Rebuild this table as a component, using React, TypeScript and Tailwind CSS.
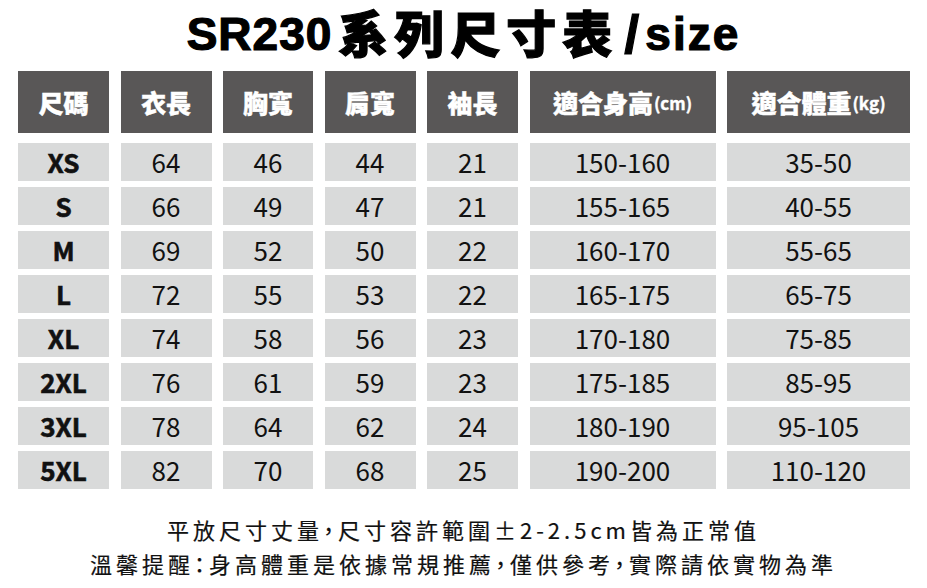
import React from "react";

const headers: { main: string; unit?: string }[] = [
  { main: "尺碼" },
  { main: "衣長" },
  { main: "胸寬" },
  { main: "肩寬" },
  { main: "袖長" },
  { main: "適合身高", unit: "(cm)" },
  { main: "適合體重", unit: "(kg)" },
];

const rows: string[][] = [
  ["XS", "64", "46", "44", "21", "150-160", "35-50"],
  ["S", "66", "49", "47", "21", "155-165", "40-55"],
  ["M", "69", "52", "50", "22", "160-170", "55-65"],
  ["L", "72", "55", "53", "22", "165-175", "65-75"],
  ["XL", "74", "58", "56", "23", "170-180", "75-85"],
  ["2XL", "76", "61", "59", "23", "175-185", "85-95"],
  ["3XL", "78", "64", "62", "24", "180-190", "95-105"],
  ["5XL", "82", "70", "68", "25", "190-200", "110-120"],
];

const gridCols =
  "grid grid-cols-[91px_91px_90px_91px_91px_186px_183px] gap-x-[11.5px]";

const cjk = "font-['Noto_Sans_CJK_TC','Noto_Sans_CJK_SC',sans-serif]";

export default function App() {
  return (
    <div className="w-[927px] h-[588px] bg-white overflow-hidden text-[#111]">
      <div className="pt-[4px] h-[71px] text-center text-[50px] leading-[60px] font-black text-black [-webkit-text-stroke:1.2px_black] font-['Liberation_Sans','Noto_Sans_CJK_TC',sans-serif]">
        <span className="text-[46px] tracking-[1px] align-[3px]">SR230</span>
        <span className="tracking-[6px] ml-[6px]">系列尺寸表</span>
        <span className="text-[54px] mx-[6px]">/</span>
        <span className="text-[46px] tracking-[2px] align-[3px]">size</span>
      </div>
      <div className={`pl-[18px] ${cjk}`}>
        <div className={`${gridCols} h-[62px]`}>
          {headers.map((h) => (
            <div
              key={h.main}
              className="bg-[#595757] text-white flex items-center justify-center text-[25px] font-black leading-none [-webkit-text-stroke:0.4px_white]"
            >
              <span>{h.main}</span>
              {h.unit && (
                <span className="text-[17px] font-bold ml-[1px]">{h.unit}</span>
              )}
            </div>
          ))}
        </div>
        <div className="mt-[10px] flex flex-col gap-[6px]">
          {rows.map((r) => (
            <div key={r[0]} className={`${gridCols} h-[38px]`}>
              {r.map((v, i) => (
                <div
                  key={i}
                  className={`bg-[#d9dada] flex items-center justify-center text-[26px] leading-none ${
                    i === 0
                      ? "font-bold [-webkit-text-stroke:0.6px_#111]"
                      : "font-normal"
                  }`}
                >
                  {v}
                </div>
              ))}
            </div>
          ))}
        </div>
      </div>
      <div className={`mt-[23px] text-center text-[22px] leading-[34px] tracking-[4px] [font-feature-settings:'palt'] text-[#111] [-webkit-text-stroke:0.2px_#111] ${cjk}`}>
        <div>平放尺寸丈量，尺寸容許範圍±2-2.5cm皆為正常值</div>
        <div>溫馨提醒：身高體重是依據常規推薦，僅供參考，實際請依實物為準</div>
      </div>
    </div>
  );
}
